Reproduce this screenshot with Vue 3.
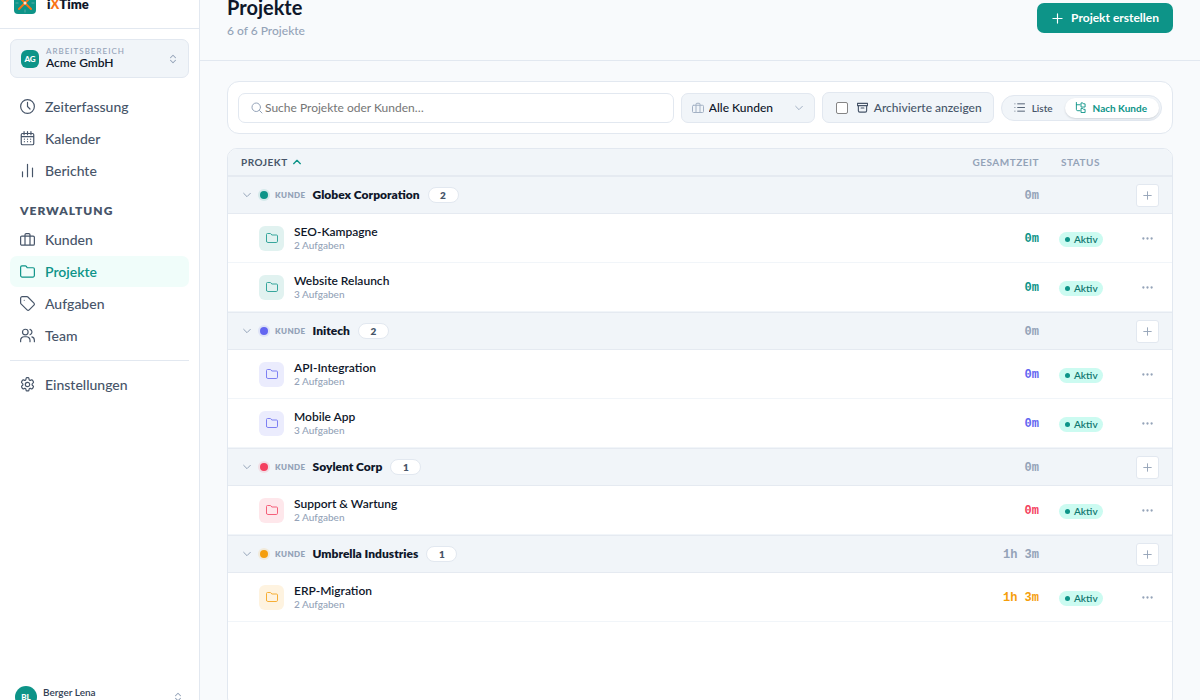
<script setup>
import { h, ref } from 'vue'

const paths = {
  clock: 'M23 12a11 11 0 1 1-22 0a11 11 0 0 1 22 0M12 5.500v6.500l4 4',
  calendar: 'M4 4h16a2 2 0 0 1 2 2v14a2 2 0 0 1-2 2H4a2 2 0 0 1-2-2V6a2 2 0 0 1 2-2M6.500 1v5M12 1v5M17.500 1v5M2 9h20M7 13h.01M12 13h.01M17 13h.01M7 17h.01M12 17h.01M17 17h.01',
  bars: 'M4 22v-8M12 22V2M20 22V8',
  briefcase: 'M3 6.500h18a2 2 0 0 1 2 2V19a2 2 0 0 1-2 2H3a2 2 0 0 1-2-2V8.500a2 2 0 0 1 2-2M8 21V4.500a2 2 0 0 1 2-2h4a2 2 0 0 1 2 2V21',
  folder: 'M1 18.500V5a2 2 0 0 1 2-2h5.500a2 2 0 0 1 1.600.8L11.500 6H21a2 2 0 0 1 2 2v10.500a2.500 2.500 0 0 1-2.500 2.500h-17A2.500 2.500 0 0 1 1 18.500',
  tag: 'M12.600 1.600A2 2 0 0 0 11.200 1H3.500A2.500 2.500 0 0 0 1 3.500v7.700a2 2 0 0 0 .6 1.400l9.700 9.700a2.400 2.400 0 0 0 3.400 0l7.600-7.600a2.400 2.400 0 0 0 0-3.400zM6.800 6.800h.01',
  users: 'M1 22v-2.500A5.500 5.500 0 0 1 6.500 14h4a5.500 5.500 0 0 1 5.500 5.500V22M13 6.500a4.500 4.500 0 1 1-9 0a4.500 4.500 0 0 1 9 0M16 2.200a4.500 4.500 0 0 1 0 8.600M19 14.300a5.500 5.500 0 0 1 4 5.200V22',
  cog: 'M9.594 2.940c.09-.542.56-1.940 1.110-1.940h2.593c.55 0 1.020 1.398 1.110 1.940l.213 1.281c.063.374.313.686.645.870l.22.127c.325.196.720.257 1.075.124l1.817-.656a1.500 1.500 0 0 1 1.770.690l1.296 2.247a1.500 1.500 0 0 1-.36 1.831l-1.303 1.127c-.293.241-.438.613-.430.992v.655c-.008.378.137.750.430.991l1.304 1.127c.424.350.634 1.155.360 1.630l-1.298 2.247a1.500 1.500 0 0 1-1.769.691l-1.817-.656c-.355-.133-.750-.072-1.076.124l-.220.128c-.331.183-.581.495-.644.869l-.213 1.281c-.09.543-.560 1.640-1.110 1.640h-2.594c-.550 0-1.019-1.098-1.110-1.640l-.213-1.281c-.062-.374-.312-.686-.644-.870l-.220-.127c-.325-.196-.720-.257-1.076-.124l-1.817.656a1.500 1.500 0 0 1-1.769-.690l-1.297-2.247a1.500 1.500 0 0 1 .360-1.631l1.304-1.127c.292-.240.437-.613.430-.991v-.655c.007-.380-.138-.751-.430-.992l-1.304-1.127a1.500 1.500 0 0 1-.360-1.830l1.297-2.247a1.500 1.500 0 0 1 1.770-.691l1.816.656c.356.133.751.072 1.076-.124l.220-.128c.332-.183.582-.495.644-.869zM15.500 12a3.500 3.500 0 1 1-7 0a3.500 3.500 0 0 1 7 0',
  updown: 'M6 9l6-6 6 6M6 15l6 6 6-6',
  search: 'M19 10.500a8.500 8.500 0 1 1-17 0a8.500 8.500 0 0 1 17 0M17 17l5 5',
  down: 'M2 7l10 10 10-10',
  up: 'M2 17l10-10 10 10',
  plus: 'M12 2v20M2 12h20',
  archive: 'M1 3h22v5H1zM3 8v11a3 3 0 0 0 3 3h12a3 3 0 0 0 3-3V8M9 13h6',
  list: 'M8 4h15M8 12h15M8 20h15M2 4h.01M2 12h.01M2 20h.01',
  tree: 'M3 1v15a3 3 0 0 0 3 3h5M3 6h8M14 2h3l1.500 2H22v7h-8zM14 14h3l1.500 2H22v7h-8z',
  dots: 'M3 12h.01M12 12h.01M21 12h.01',
}
const Icon = (p) => h('svg', {
  viewBox: '0 0 24 24', width: p.size, height: p.size, fill: 'none', stroke: 'currentColor',
  'stroke-width': p.weight || 1.9, 'stroke-linecap': 'round', 'stroke-linejoin': 'round', 'aria-hidden': 'true',
}, [h('path', { d: paths[p.name] })])
Icon.props = ['name', 'size', 'weight']

const mainNav = [['clock', 'Zeiterfassung'], ['calendar', 'Kalender'], ['bars', 'Berichte']]
const adminNav = [['briefcase', 'Kunden'], ['folder', 'Projekte'], ['tag', 'Aufgaben'], ['users', 'Team']]
const groups = [
  { name: 'Globex Corporation', tone: 'teal', total: '0m', items: [['SEO-Kampagne', 2, '0m'], ['Website Relaunch', 3, '0m']] },
  { name: 'Initech', tone: 'indigo', total: '0m', items: [['API-Integration', 2, '0m'], ['Mobile App', 3, '0m']] },
  { name: 'Soylent Corp', tone: 'rose', total: '0m', items: [['Support & Wartung', 2, '0m']] },
  { name: 'Umbrella Industries', tone: 'amber', total: '1h 3m', items: [['ERP-Migration', 2, '1h 3m']] },
]
const search = ref('')
const archived = ref(false)
</script>

<template>
  <div class="app">
    <aside class="sidebar">
      <div class="brand">
        <svg class="logo" viewBox="0 0 22 22" width="22" height="22" aria-hidden="true">
          <rect width="22" height="22" rx="4" fill="#0d9488" />
          <path d="M11 1.500v3M11 17.500v3M1.500 11h3M17.500 11h3" stroke="#5eaaa3" />
          <path d="M5 5l12 12M17 5L5 17" stroke="#f97316" stroke-width="2" stroke-linecap="round" />
          <circle cx="11" cy="11" r="1.500" fill="#fde3cf" />
        </svg>
        <span class="brand-name">i<b>X</b>Time</span>
      </div>
      <button class="workspace" type="button">
        <span class="ws-avatar">AG</span>
        <span class="ws-text"><span class="ws-label">ARBEITSBEREICH</span><span class="ws-name">Acme GmbH</span></span>
        <Icon name="updown" size="10" weight="2.500" />
      </button>
      <nav class="nav">
        <a v-for="[icon, label] in mainNav" :key="label" href="#" class="nav-link"><Icon :name="icon" size="15" />{{ label }}</a>
        <h2 class="nav-title">VERWALTUNG</h2>
        <a v-for="[icon, label] in adminNav" :key="label" href="#" class="nav-link" :class="{ active: label === 'Projekte' }"><Icon :name="icon" size="15" />{{ label }}</a>
        <hr class="divider">
        <a href="#" class="nav-link"><Icon name="cog" size="15" />Einstellungen</a>
      </nav>
      <button class="user" type="button">
        <span class="user-avatar">BL</span>
        <span class="user-name">Berger Lena</span>
        <Icon name="updown" size="10" weight="2.500" />
      </button>
    </aside>

    <main class="main">
      <header class="header">
        <div class="heading">
          <h1>Projekte</h1>
          <p>6 of 6 Projekte</p>
        </div>
        <button class="create" type="button"><Icon name="plus" size="11" weight="2.500" />Projekt erstellen</button>
      </header>

      <section class="content">
        <div class="toolbar">
          <label class="search">
            <Icon name="search" size="12" weight="2" />
            <input v-model="search" type="text" placeholder="Suche Projekte oder Kunden…" aria-label="Suche Projekte oder Kunden">
          </label>
          <label class="client">
            <Icon name="briefcase" size="12" weight="2" />
            <select aria-label="Kunde"><option>Alle Kunden</option></select>
            <Icon name="down" size="8" weight="3" />
          </label>
          <label class="archive">
            <input v-model="archived" type="checkbox">
            <Icon name="archive" size="11" weight="2.500" />
            <span>Archivierte anzeigen</span>
          </label>
          <div class="toggle">
            <button type="button"><Icon name="list" size="11" weight="2" />Liste</button>
            <button type="button" class="on"><Icon name="tree" size="11" weight="2" />Nach Kunde</button>
          </div>
        </div>

        <div class="card">
          <table>
            <colgroup><col><col class="c-time"><col class="c-status"><col class="c-act"></colgroup>
            <thead>
              <tr>
                <th class="sort">PROJEKT<Icon name="up" size="8" weight="4" /></th>
                <th class="num">GESAMTZEIT</th>
                <th class="status">STATUS</th>
                <th></th>
              </tr>
            </thead>
            <tbody v-for="g in groups" :key="g.name" :class="g.tone">
              <tr class="group">
                <td>
                  <div class="group-head">
                    <Icon name="down" size="8" weight="3" />
                    <span class="dot"></span>
                    <span class="kind">KUNDE</span>
                    <strong>{{ g.name }}</strong>
                    <span class="count">{{ g.items.length }}</span>
                  </div>
                </td>
                <td class="num time">{{ g.total }}</td>
                <td></td>
                <td class="act"><button class="add" type="button" aria-label="Projekt hinzufügen"><Icon name="plus" size="9" weight="2.500" /></button></td>
              </tr>
              <tr v-for="[name, tasks, time] in g.items" :key="name" class="row">
                <td>
                  <div class="project">
                    <span class="tile"><Icon name="folder" size="12" weight="2" /></span>
                    <span class="names"><span class="name">{{ name }}</span><span class="sub">{{ tasks }} Aufgaben</span></span>
                  </div>
                </td>
                <td class="num time">{{ time }}</td>
                <td class="state"><span class="pill">Aktiv</span></td>
                <td class="act"><button class="more" type="button" aria-label="Aktionen"><Icon name="dots" size="11" weight="5" /></button></td>
              </tr>
            </tbody>
          </table>
        </div>
      </section>
    </main>
  </div>
</template>

<style>
body { background: #f8fafc; }
</style>

<style scoped>
* { box-sizing: border-box; }
button, input, select { font: inherit; color: inherit; }
button { border: 0; background: none; padding: 0; cursor: pointer; }
svg { display: block; flex: none; }
.app { display: flex; height: 100vh; overflow: hidden; font: 500 12px/16px Lato, Inter, sans-serif; color: #0f172a; }

.sidebar { width: 200px; flex: none; display: flex; flex-direction: column; background: #fff; border-right: 1px solid #e2e8f0; overflow: hidden; }
.brand { height: 29px; flex: none; display: flex; align-items: flex-end; gap: 11px; padding: 0 14px 14px; border-bottom: 1px solid #e2e8f0; }
.brand-name { padding-bottom: 4px; font-size: 13px; line-height: 12px; font-weight: 800; }
.brand-name b { color: #f97316; font-weight: 900; }
.workspace { flex: none; display: flex; align-items: center; gap: 7px; height: 39px; margin: 10px 10px 0; padding: 0 10px; text-align: left; background: #f1f5f9; border: 1px solid #e2e8f0; border-radius: 7px; }
.workspace svg, .user svg { color: #94a3b8; }
.ws-avatar { width: 18px; height: 18px; border-radius: 6px; background: #0d9488; color: #fff; font-size: 8px; line-height: 18px; font-weight: 900; text-align: center; }
.ws-text { flex: 1; display: flex; flex-direction: column; }
.ws-label { font-size: 8px; line-height: 9px; letter-spacing: 1px; color: #94a3b8; }
.ws-name { line-height: 14px; font-weight: 600; }
.nav { flex: 1; display: flex; flex-direction: column; gap: 1px; padding: 13px 10px 0; }
.nav-link { display: flex; align-items: center; gap: 10px; height: 31px; padding: 0 10px; border-radius: 7px; font-size: 14px; line-height: 20px; font-weight: 500; color: #475569; text-decoration: none; }
.nav-link.active { background: #f0fdfa; color: #0d9488; font-weight: 600; }
.nav-title { margin: 16px 0 4px; padding: 0 10px; font-size: 12px; line-height: 16px; font-weight: 800; letter-spacing: 1px; color: #475569; }
.divider { width: 100%; margin: 8px 0 7px; border: 0; border-top: 1px solid #e2e8f0; }
.user { flex: none; display: flex; align-items: flex-start; gap: 6px; margin: 0 16px -8px 15px; text-align: left; }
.user-avatar { width: 22px; height: 22px; border-radius: 50%; background: #0d9488; color: #fff; font-size: 8px; line-height: 23px; font-weight: 900; text-align: center; }
.user-name { flex: 1; font-size: 10px; line-height: 12px; font-weight: 600; color: #334155; }
.user svg { margin-top: 6px; }

.main { flex: 1; min-width: 0; display: flex; flex-direction: column; }
.header { height: 61px; flex: none; display: flex; align-items: flex-start; justify-content: space-between; padding: 0 27px; border-bottom: 1px solid #e2e8f0; }
.heading { margin-top: -5px; }
h1 { margin: 0; font-size: 20px; line-height: 24px; font-weight: 700; }
.heading p { margin: 4px 0 0; color: #94a3b8; }
.create { display: flex; align-items: center; gap: 8px; height: 30px; margin-top: 3px; padding: 0 14px 0 15px; border-radius: 7px; background: #0d9488; color: #fff; font-weight: 700; }

.content { flex: 1; min-height: 0; display: flex; flex-direction: column; gap: 14px; padding: 20px 27px 0; }
.toolbar { flex: none; display: flex; align-items: center; gap: 7px; padding: 10px; background: #fff; border: 1px solid #e2e8f0; border-radius: 12px; }
.search, .client, .archive { display: flex; align-items: center; border: 1px solid #e2e8f0; border-radius: 7px; }
.search { flex: 1; height: 30px; gap: 2px; padding: 0 12px; color: #94a3b8; }
.search input { flex: 1; min-width: 0; padding: 0; border: 0; outline: 0; background: none; color: #0f172a; font-weight: 400; }
.search input::placeholder { color: #757575; opacity: 1; }
.client { width: 134px; height: 30px; gap: 5px; padding: 0 11px 0 10px; background: #f1f5f9; color: #a3b1c4; }
.client select { flex: 1; min-width: 0; padding: 0; border: 0; outline: 0; background: none; appearance: none; color: #0f172a; }
.archive { height: 31px; gap: 9px; padding: 0 11px 0 13px; background: #f1f5f9; color: #475569; }
.archive input { appearance: none; width: 12px; height: 12px; margin: 0; border: 1px solid #858585; border-radius: 2px; background: #fff; }
.archive input:checked { background: #0d9488; }
.archive svg { margin-right: -3px; }
.toggle { display: flex; padding: 2px; height: 26px; border: 1px solid #e2e8f0; border-radius: 13px; background: #f1f5f9; }
.toggle button { display: flex; align-items: center; gap: 7px; padding: 0 12px 0 10px; border-radius: 10px; font-size: 10px; font-weight: 600; color: #475569; }
.toggle button.on { background: #fff; color: #0d9488; font-weight: 700; box-shadow: 0 1px 2px #0f172a26; }

.card { flex: 1; min-height: 0; margin-bottom: -8px; background: #fff; border: 1px solid #e2e8f0; border-radius: 10px; overflow: hidden; }
table { width: 100%; border-collapse: separate; border-spacing: 0; table-layout: fixed; }
.c-time { width: 110px; }
.c-status { width: 73px; }
.c-act { width: 50px; }
th { height: 27px; padding: 0 10px; text-align: left; font-size: 10px; line-height: 12px; font-weight: 700; letter-spacing: .05em; color: #94a3b8; background: #f1f5f9; border-bottom: 1px solid #e5eaf1; }
th.sort { padding-left: 13px; color: #475569; }
th.sort svg { display: inline-block; margin-left: 5px; color: #0d9488; }
th.status { padding-left: 12px; }
td { padding: 0 10px; }
.num { text-align: right; }
.time { padding-top: 2px; font: 700 12px/16px "Liberation Mono", monospace; color: var(--tone); }
.act { padding: 0; }
.act button { display: flex; align-items: center; justify-content: center; width: 23px; height: 23px; margin: 0 auto; color: #94a3b8; }
.act .add { background: #fff; border: 1px solid #e2e8f0; border-radius: 3px; }
.group td { height: 38px; background: #f1f5f9; border-top: 1px solid #e5eaf1; border-bottom: 1px solid #e5eaf1; }
.group .time { color: #94a3b8; }
.group-head { display: flex; align-items: center; padding-left: 5px; color: #94a3b8; }
.dot { width: 8px; height: 8px; margin: 0 7px 0 9px; border-radius: 50%; background: var(--tone); box-shadow: 0 0 0 2px var(--soft); }
.kind { font-size: 8px; line-height: 12px; font-weight: 800; letter-spacing: .05em; }
.group-head strong { margin: 0 8px 0 7px; font-weight: 800; color: #0f172a; }
.count { width: 31px; height: 16px; border: 1px solid #e2e8f0; border-radius: 8px; background: #fff; color: #475569; font-size: 10px; line-height: 14px; font-weight: 800; text-align: center; }
.row td { height: 49px; border-bottom: 1px solid #f1f5f9; }
.project { display: flex; align-items: center; gap: 10px; padding-left: 21px; }
.tile { width: 25px; height: 25px; display: flex; align-items: center; justify-content: center; border-radius: 6px; background: var(--soft); color: var(--tone); }
.tile svg { opacity: .8; }
.names { display: flex; flex-direction: column; }
.name { line-height: 15px; font-weight: 600; }
.sub { font-size: 10px; line-height: 13px; color: #94a3b8; }
.pill { display: inline-flex; align-items: center; gap: 4px; height: 15px; padding: 0 5px 0 6px; border-radius: 8px; background: #ccfbf1; color: #0f766e; font-size: 10px; line-height: 15px; font-weight: 600; }
.pill::before { content: ""; width: 5px; height: 5px; border-radius: 50%; background: #0d9488; }
.teal { --tone: #0d9488; --soft: #0d948820; }
.indigo { --tone: #6366f1; --soft: #6366f120; }
.rose { --tone: #f43f5e; --soft: #f43f5e20; }
.amber { --tone: #f59e0b; --soft: #f59e0b20; }
</style>
